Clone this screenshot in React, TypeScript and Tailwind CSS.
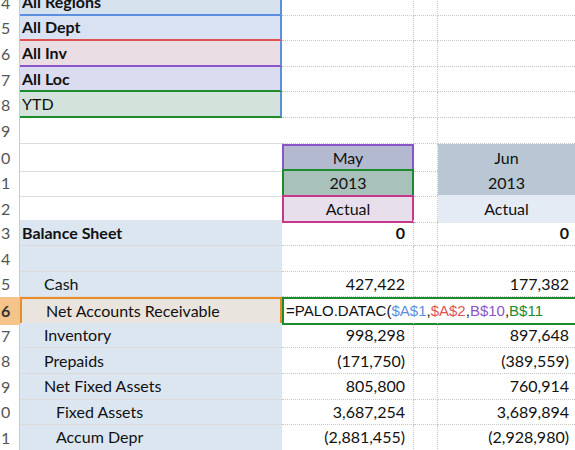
type Row = {
  n: number
  a?: string
  aCls?: string
  aBold?: boolean
  indent?: number
  b?: string
  bCls?: string
  d?: string
  dCls?: string
  center?: boolean
}

const rows: Row[] = [
  { n: 14, a: "All Regions", aCls: "bg-[#d6e2ee] border-b-2 border-b-[#5b8fe0]", aBold: true },
  { n: 15, a: "All Dept", aCls: "bg-[#d9e2f3] border-b-2 border-b-[#e05252]", aBold: true },
  { n: 16, a: "All Inv", aCls: "bg-[#eadee4] border-b-2 border-b-[#8b55c8]", aBold: true },
  { n: 17, a: "All Loc", aCls: "bg-[#dcdcf0] border-b-2 border-b-[#1e8a2e]", aBold: true },
  { n: 18, a: "YTD", aCls: "bg-[#d3e3dc] border-b-2 border-b-[#1e8a2e]" },
  { n: 19 },
  { n: 20, b: "May", bCls: "bg-[#b3b9cf] border-2 border-solid border-[#8b55c8]", d: "Jun", dCls: "bg-[#b8c7d3]", center: true },
  { n: 21, b: "2013", bCls: "bg-[#a8c1bb] border-2 border-solid border-[#1e8a2e]", d: "2013", dCls: "bg-[#b8c7d3]", center: true },
  { n: 22, b: "Actual", bCls: "bg-[#e7e0ec] border-2 border-solid border-[#c8388a]", d: "Actual", dCls: "bg-[#e4ebf5]", center: true },
  { n: 23, a: "Balance Sheet", aBold: true, b: "0", d: "0" },
  { n: 24 },
  { n: 25, a: "Cash", indent: 1, b: "427,422", d: "177,382" },
  { n: 26 },
  { n: 27, a: "Inventory", indent: 1, b: "998,298", d: "897,648" },
  { n: 28, a: "Prepaids", indent: 1, b: "(171,750)", d: "(389,559)" },
  { n: 29, a: "Net Fixed Assets", indent: 1, b: "805,800", d: "760,914" },
  { n: 30, a: "Fixed Assets", indent: 2, b: "3,687,254", d: "3,689,894" },
  { n: 31, a: "Accum Depr", indent: 2, b: "(2,881,455)", d: "(2,928,980)" },
]

const font = { fontFamily: "Lato, 'Noto Sans', sans-serif" }
const dotted = "border-b border-r border-dotted border-[#c8c8c8]"

export default function App() {
  return (
    <div className="w-[575px] h-[450px] overflow-hidden bg-white text-[16px] text-[#111]" style={font}>
      <div className="-mt-[10px]">
        {rows.map((r) => {
          const lowerA = r.n >= 23
          if (r.n === 26) {
            return (
              <div key={r.n} className="grid grid-cols-[20px_262px_132px_24px_137px] h-[25.6px]">
                <div className="bg-[#f5c48a] flex items-center pl-[1px] font-bold text-[#333]">6</div>
                <div className="bg-[#eae4de] border-2 border-[#e88b2a] flex items-center pl-[24px]">
                  Net Accounts Receivable
                </div>
                <div
                  className="col-span-3 border-y-2 border-l-2 border-[#1e8a2e] flex items-center whitespace-nowrap overflow-hidden pl-[2px] text-[15px]"
                  style={{ fontFamily: "'Liberation Sans', Arial, sans-serif" }}
                >
                  =PALO.DATAC(<span className="text-[#5b8fe0]">$A$1</span>,<span className="text-[#e05252]">$A$2</span>,
                  <span className="text-[#8b55c8]">B$10</span>,<span className="text-[#1e8a2e]">B$11</span>
                </div>
              </div>
            )
          }
          const aBorder = r.aCls ?? `${lowerA ? "bg-[#dce6f1]" : ""} border-b border-[#dcdcdc]`
          return (
            <div key={r.n} className="grid grid-cols-[20px_262px_132px_24px_137px] h-[25.6px]">
              <div className="border-r border-[#c8ccd2] flex items-center pl-[1px] text-[#555] overflow-hidden">
                {r.n % 10}
              </div>
              <div
                className={`flex items-center overflow-hidden whitespace-nowrap ${aBorder} ${r.aBold ? "font-bold" : ""} ${r.indent === 1 ? "pl-[24px]" : r.indent === 2 ? "pl-[36px]" : "pl-[2px]"} ${r.n <= 18 ? "border-r-2 border-r-[#5b8fe0]" : ""}`}
              >
                {r.a}
              </div>
              <div
                className={`flex items-center ${r.bCls ?? dotted} ${r.center ? "justify-center" : "justify-end pr-[8px]"} ${r.n === 23 ? "font-bold" : ""}`}
              >
                {r.b}
              </div>
              <div className={dotted} />
              <div
                className={`flex items-center ${r.dCls ?? "border-b border-dotted border-[#c8c8c8]"} ${r.center ? "justify-center" : "justify-end pr-[6px]"} ${r.n === 23 ? "font-bold" : ""}`}
              >
                {r.d}
              </div>
            </div>
          )
        })}
      </div>
    </div>
  )
}
